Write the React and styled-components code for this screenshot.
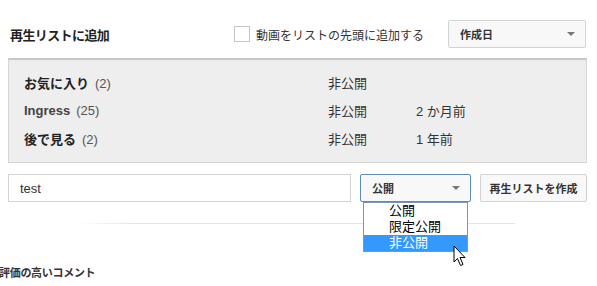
import React from "react";
import styled, { createGlobalStyle } from "styled-components";

const Global = createGlobalStyle`
  html, body { margin: 0; padding: 0; background: #fff; }
  body {
    font-family: "Liberation Sans", Arial, "Noto Sans CJK JP", sans-serif;
    color: #333;
    overflow: hidden;
  }
`;

const Page = styled.div`
  width: 597px;
  height: 286px;
  display: flex;
  flex-direction: column;
`;

const Header = styled.div`
  display: flex;
  align-items: center;
  height: 28px;
  margin-top: 20px;
  padding: 0 11px 0 10px;
`;

const Title = styled.div`
  font-size: 13px;
  font-weight: bold;
  color: #222;
  letter-spacing: -0.6px;
  flex: 1;
`;

const CheckLabel = styled.label`
  display: flex;
  align-items: center;
  gap: 6px;
  font-size: 12px;
  color: #333;
  margin-right: 24px;
`;

const Box = styled.span`
  width: 14px;
  height: 14px;
  border: 1px solid #c6c6c6;
  background: #fff;
  display: inline-block;
`;

const Select = styled.div`
  position: relative;
  box-sizing: border-box;
  width: ${(p) => p.$w}px;
  height: 28px;
  display: flex;
  align-items: center;
  justify-content: space-between;
  padding: 0 10px 0 11px;
  background: #f8f8f8;
  border: 1px solid ${(p) => (p.$open ? "#5b8cb6" : "#d3d3d3")};
  border-radius: 2px;
  font-size: 11px;
  font-weight: bold;
  color: #333;
`;

const Arrow = styled.span`
  width: 0;
  height: 0;
  border-left: 4px solid transparent;
  border-right: 4px solid transparent;
  border-top: 4px solid #777;
`;

const Panel = styled.div`
  margin: 10px 10px 0 8px;
  height: 105px;
  box-sizing: border-box;
  background: #eeeeee;
  border: 1px solid #d6d6d6;
  border-top: 2px solid #c8c8c8;
  padding-top: 8px;
  display: flex;
  flex-direction: column;
`;

const Row = styled.div`
  display: grid;
  grid-template-columns: 304px 88px 1fr;
  height: 28px;
  align-items: center;
  padding-left: 15px;
  font-size: 13px;
  color: #333;
`;

const Name = styled.span`
  font-weight: bold;
  color: ${(p) => (p.$muted ? "#444" : "#222")};
`;

const Count = styled.span`
  font-weight: normal;
  color: #555;
  margin-left: 6px;
`;

const FormRow = styled.div`
  display: flex;
  gap: 9px;
  margin: 11px 10px 0 8px;
  height: 28px;
`;

const Input = styled.div`
  box-sizing: border-box;
  width: 343px;
  height: 28px;
  border: 1px solid #d3d3d3;
  display: flex;
  align-items: center;
  padding-left: 11px;
  font-size: 13px;
  color: #333;
`;

const Button = styled.div`
  box-sizing: border-box;
  width: 107px;
  height: 28px;
  border: 1px solid #d3d3d3;
  border-radius: 2px;
  background: #f8f8f8;
  display: flex;
  align-items: center;
  justify-content: center;
  font-size: 11px;
  font-weight: bold;
  color: #333;
`;

const Menu = styled.div`
  position: absolute;
  left: 2px;
  top: 27px;
  width: 105px;
  box-sizing: border-box;
  border: 1px solid #7a96b8;
  background: #fff;
  z-index: 2;
`;

const Option = styled.div`
  height: 16px;
  line-height: 16px;
  padding-left: 25px;
  font-size: 13px;
  font-weight: normal;
  background: ${(p) => (p.$sel ? "#3399ff" : "#fff")};
  color: ${(p) => (p.$sel ? "#fff" : "#000")};
`;

const Cursor = styled.svg`
  position: absolute;
  left: 92px;
  top: 70px;
  z-index: 3;
`;

const Divider = styled.div`
  margin: 21px 0 0 77px;
  width: 438px;
  height: 1px;
  background: linear-gradient(to right, rgba(229, 229, 229, 0), #e3e3e3 60px, #e3e3e3);
`;

const Comments = styled.div`
  margin: 40px 0 0 -1px;
  font-size: 11px;
  font-weight: bold;
  color: #333;
  letter-spacing: -0.3px;
`;

export default function App() {
  const rows = [
    { name: "お気に入り", count: 2, status: "非公開", when: "" },
    { name: "Ingress", count: 25, status: "非公開", when: "2 か月前", muted: true },
    { name: "後で見る", count: 2, status: "非公開", when: "1 年前" },
  ];
  return (
    <Page>
      <Global />
      <Header>
        <Title>再生リストに追加</Title>
        <CheckLabel>
          <Box />
          動画をリストの先頭に追加する
        </CheckLabel>
        <Select $w={138}>
          作成日
          <Arrow />
        </Select>
      </Header>
      <Panel>
        {rows.map((r) => (
          <Row key={r.name}>
            <span>
              <Name $muted={r.muted}>{r.name}</Name>
              <Count>({r.count})</Count>
            </span>
            <span>{r.status}</span>
            <span>{r.when}</span>
          </Row>
        ))}
      </Panel>
      <FormRow>
        <Input>test</Input>
        <Select $w={111} $open>
          公開
          <Arrow />
          <Menu>
            <Option>公開</Option>
            <Option>限定公開</Option>
            <Option $sel>非公開</Option>
          </Menu>
          <Cursor width="14" height="23" viewBox="0 0 14 23">
            <path
              d="M1 1 L1 17 L4.5 13.5 L7.5 20.5 L10 19.5 L7 12.5 L12 12.5 Z"
              fill="#fff"
              stroke="#000"
              strokeWidth="1"
              strokeLinejoin="miter"
            />
          </Cursor>
        </Select>
        <Button>再生リストを作成</Button>
      </FormRow>
      <Divider />
      <Comments>評価の高いコメント</Comments>
    </Page>
  );
}
